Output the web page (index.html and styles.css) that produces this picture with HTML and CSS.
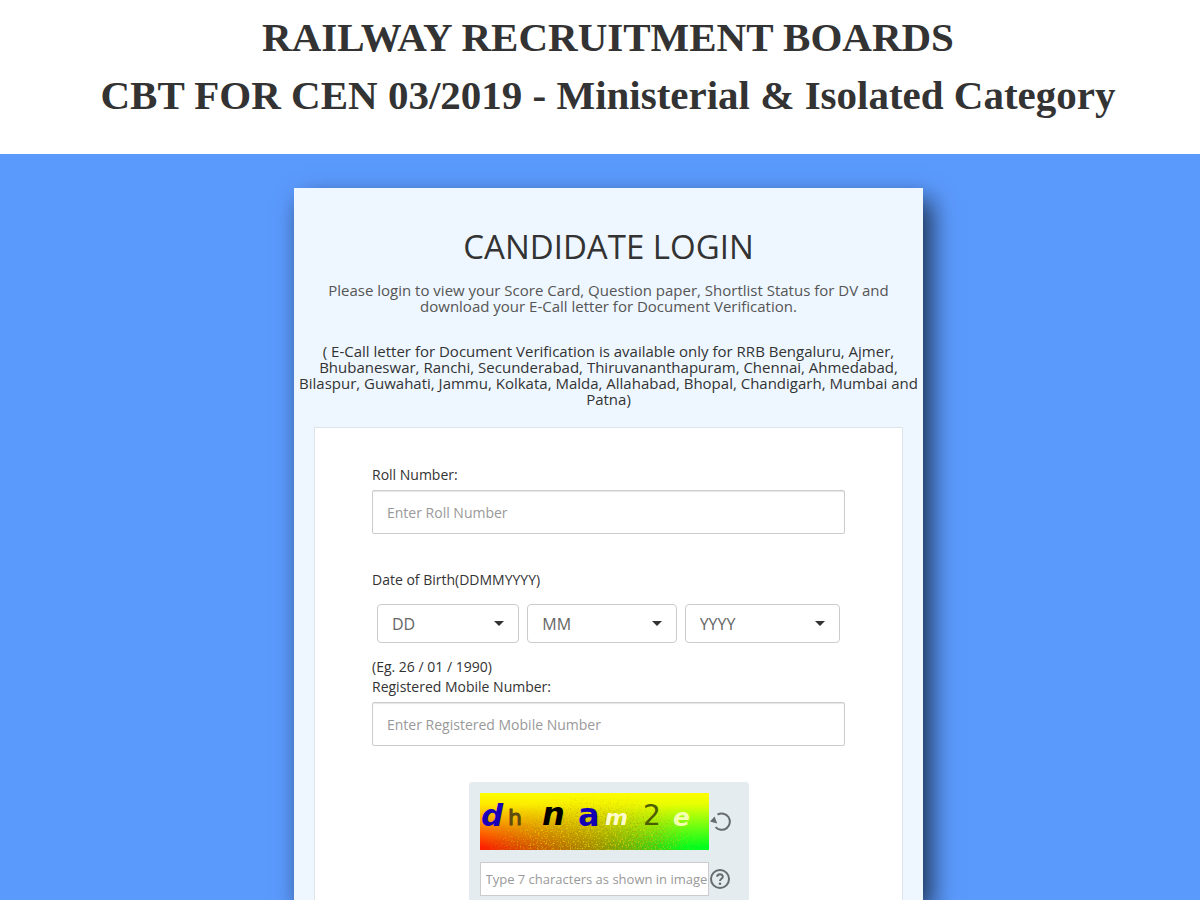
FILE: index.html
```
<!DOCTYPE html>
<html lang="en">
<head>
    <meta charset="UTF-8">
    <meta name="viewport" content="width=device-width, initial-scale=1.0">
    <title>Railway Recruitment Boards - Candidate Login</title>
    <link rel="stylesheet" href="styles.css">
</head>
<body>

    <header class="page-header">
        <h1>RAILWAY RECRUITMENT BOARDS</h1>
        <h1>CBT FOR CEN 03/2019 - Ministerial &amp; Isolated Category</h1>
    </header>

    <main class="page-main">
        <div class="login-card">
            <h2>CANDIDATE LOGIN</h2>
            <p class="intro">Please login to view your Score Card, Question paper, Shortlist Status for DV and download your E-Call letter for Document Verification.</p>
            <p class="notice">( E-Call letter for Document Verification is available only for RRB Bengaluru, Ajmer, Bhubaneswar, Ranchi, Secunderabad, Thiruvananthapuram, Chennai, Ahmedabad, Bilaspur, Guwahati, Jammu, Kolkata, Malda, Allahabad, Bhopal, Chandigarh, Mumbai and Patna)</p>

            <form class="login-form">
                <!-- Roll number -->
                <label for="roll">Roll Number:</label>
                <input class="text-input" type="text" id="roll" placeholder="Enter Roll Number">

                <!-- Date of birth -->
                <label for="day">Date of Birth(DDMMYYYY)</label>
                <div class="dob-row">
                    <select id="day"><option>DD</option></select>
                    <select aria-label="Month"><option>MM</option></select>
                    <select aria-label="Year"><option>YYYY</option></select>
                </div>
                <span>(Eg. 26 / 01 / 1990)</span>

                <!-- Mobile -->
                <label for="mobile">Registered Mobile Number:</label>
                <input class="text-input" type="text" id="mobile" placeholder="Enter Registered Mobile Number">

                <!-- Captcha -->
                <div class="captcha">
                    <svg class="captcha-image" viewBox="0 0 229 57" role="img" aria-label="Captcha">
                        <defs>
                            <linearGradient id="base" x1="0" x2="1" y1="0" y2="0">
                                <stop offset="0" stop-color="#ff1e00"/>
                                <stop offset="0.5" stop-color="#a08c00"/>
                                <stop offset="0.9" stop-color="#00ff1e"/>
                            </linearGradient>
                            <linearGradient id="top" x1="0" x2="0" y1="0" y2="1">
                                <stop offset="0" stop-color="#ffff00"/>
                                <stop offset="0.2" stop-color="#ffff00" stop-opacity="0.9"/>
                                <stop offset="0.95" stop-color="#ffff00" stop-opacity="0"/>
                            </linearGradient>
                            <!-- noise is strongest at the bottom centre -->
                            <radialGradient id="fade" cx="0.5" cy="1" r="0.5" gradientTransform="translate(0 -1) scale(1 2)">
                                <stop offset="0" stop-color="#ccc"/>
                                <stop offset="0.5" stop-color="#999"/>
                                <stop offset="1" stop-color="#000"/>
                            </radialGradient>
                            <mask id="lower">
                                <rect width="229" height="57" fill="url(#fade)"/>
                            </mask>
                            <filter id="noise" x="0" y="0" width="1" height="1">
                                <feTurbulence type="fractalNoise" baseFrequency="0.6" numOctaves="2" seed="4"/>
                                <feColorMatrix values="0 0 0 0 0.9  0 0 0 0 0.75  0 0 0 0 0  4 0 0 0 -2.1"/>
                            </filter>
                            <filter id="dark" x="0" y="0" width="1" height="1">
                                <feTurbulence type="fractalNoise" baseFrequency="0.6" numOctaves="2" seed="9"/>
                                <feColorMatrix values="0 0 0 0 0.4  0 0 0 0 0.3  0 0 0 0 0  4 0 0 0 -2"/>
                            </filter>
                        </defs>
                        <rect width="229" height="57" fill="url(#base)"/>
                        <rect width="229" height="57" fill="url(#top)"/>
                        <g mask="url(#lower)">
                            <rect width="229" height="57" filter="url(#dark)"/>
                            <rect width="229" height="57" filter="url(#noise)"/>
                        </g>
                        <g class="captcha-text">
                            <text x="1" y="33" font-size="31" font-weight="bold" font-style="italic" fill="#1a00b8">d</text>
                            <text x="28" y="32" font-size="22" fill="#5c4a10" stroke="#5c4a10">h</text>
                            <text x="62" y="32" font-size="32" font-weight="bold" font-style="italic" fill="#000">n</text>
                            <text x="98" y="33" font-size="32" font-weight="bold" fill="#1400b4">a</text>
                            <text x="125" y="32" font-size="22" font-weight="bold" font-style="italic" fill="#fffbd0">m</text>
                            <text x="163" y="32" font-size="28" fill="#4c5c00">2</text>
                            <text x="193" y="33" font-size="25" font-weight="bold" font-style="italic" fill="#f4ffb0">e</text>
                        </g>
                    </svg>
                    <button class="icon-button" type="button" aria-label="Refresh captcha">
                        <svg width="22" height="22" viewBox="0 0 22 22">
                            <path d="M7.5 3.6 A8.2 8.2 0 1 1 5.6 16.2" fill="none" stroke="#666b6e" stroke-width="2"/>
                            <path d="M0 10.5 L4.6 5.4 L7.2 12.4 Z" fill="#666b6e"/>
                        </svg>
                    </button>
                    <input class="captcha-input" type="text" aria-label="Captcha text" placeholder="Type 7 characters as shown in image">
                    <button class="icon-button" type="button" aria-label="Help">
                        <svg width="22" height="22" viewBox="0 0 22 22">
                            <circle cx="10" cy="11" r="9" fill="none" stroke="#666b6e" stroke-width="2"/>
                            <path d="M7.2 8.8 C7.2 5.4 12.8 5.4 12.8 8.7 C12.8 10.8 10 10.8 10 13" fill="none" stroke="#666b6e" stroke-width="2"/>
                            <circle cx="10" cy="15.7" r="1.3" fill="#666b6e"/>
                        </svg>
                    </button>
                </div>
            </form>
        </div>
    </main>

</body>
</html>
```
FILE: styles.css
```
* {
    box-sizing: border-box;
}

body {
    margin: 0;
    min-height: 100vh;
    display: flex;
    flex-direction: column;
    background: #5b9afd;
    color: #333;
    font-family: "Open Sans", "Noto Sans", sans-serif;
    font-size: 14px;
    line-height: 20px;
}

.page-header {
    background: #fff;
    padding: 8px 0 30px 16px;
    text-align: center;
}

h1 {
    margin: 0;
    font-family: "Liberation Serif", "Times New Roman", serif;
    font-size: 41px;
    line-height: 58px;
}

.page-main {
    flex: 1;
    display: flex;
    justify-content: center;
    padding: 34px 0 0 17px;
    overflow: hidden;
}

/* Login card */
.login-card {
    width: 100%;
    max-width: 629px;
    padding: 39px 0 0;
    display: flex;
    flex-direction: column;
    background: #eef7ff;
    box-shadow: 8px 12px 24px rgba(0, 0, 0, 0.7);
    text-align: center;
}

h2 {
    margin: 0 0 15px;
    font-size: 33px;
    font-weight: 400;
    line-height: 40px;
}

.intro {
    margin: 0 30px 29px;
    color: #555;
    font-size: 15px;
    line-height: 16px;
}

.notice {
    margin: 0 4px 20px;
    font-size: 15px;
    line-height: 16px;
}

.login-form {
    flex: 1;
    margin: 0 20px;
    padding: 37px 57px 0;
    display: flex;
    flex-direction: column;
    background: #fff;
    border: 1px solid #dfe4e8;
    border-bottom: 0;
    text-align: left;
}

.text-input {
    height: 44px;
    margin: 5px 0 36px;
    padding: 0 14px;
    border: 1px solid #ccc;
    border-radius: 2px;
    box-shadow: inset 0 1px 1px rgba(0, 0, 0, 0.1);
    font: inherit;
}

::placeholder {
    color: #999;
    opacity: 1;
}

/* Date of birth */
.dob-row {
    display: grid;
    grid-template-columns: 142fr 149fr 155fr;
    gap: 8px;
    margin: 14px 5px;
}

select {
    height: 39px;
    min-width: 0;
    padding: 0 14px;
    appearance: none;
    background: #fff url("data:image/svg+xml,%3Csvg xmlns='http://www.w3.org/2000/svg' width='10' height='5'%3E%3Cpath d='M0 0h10L5 5z' fill='%23333'/%3E%3C/svg%3E") no-repeat right 14px center;
    border: 1px solid #ccc;
    border-radius: 4px;
    color: #666;
    font: inherit;
    font-size: 16px;
}

/* Captcha */
.captcha {
    width: 280px;
    max-width: 100%;
    margin: 0 auto;
    padding: 11px 17px 4px 11px;
    display: grid;
    grid-template-columns: 1fr 22px;
    gap: 12px 1px;
    align-items: center;
    background: #e5ecf0;
    border-radius: 3px 3px 0 0;
}

.captcha-image {
    display: block;
    width: 100%;
}

.captcha-text {
    font-family: "DejaVu Sans", sans-serif;
}

.captcha-input {
    width: 100%;
    height: 34px;
    padding: 0 0 0 5px;
    border: 1px solid #ccc;
    font: inherit;
    font-size: 13px;
}

.icon-button {
    padding: 0;
    border: 0;
    background: none;
    cursor: pointer;
}

.icon-button svg {
    display: block;
}
```
